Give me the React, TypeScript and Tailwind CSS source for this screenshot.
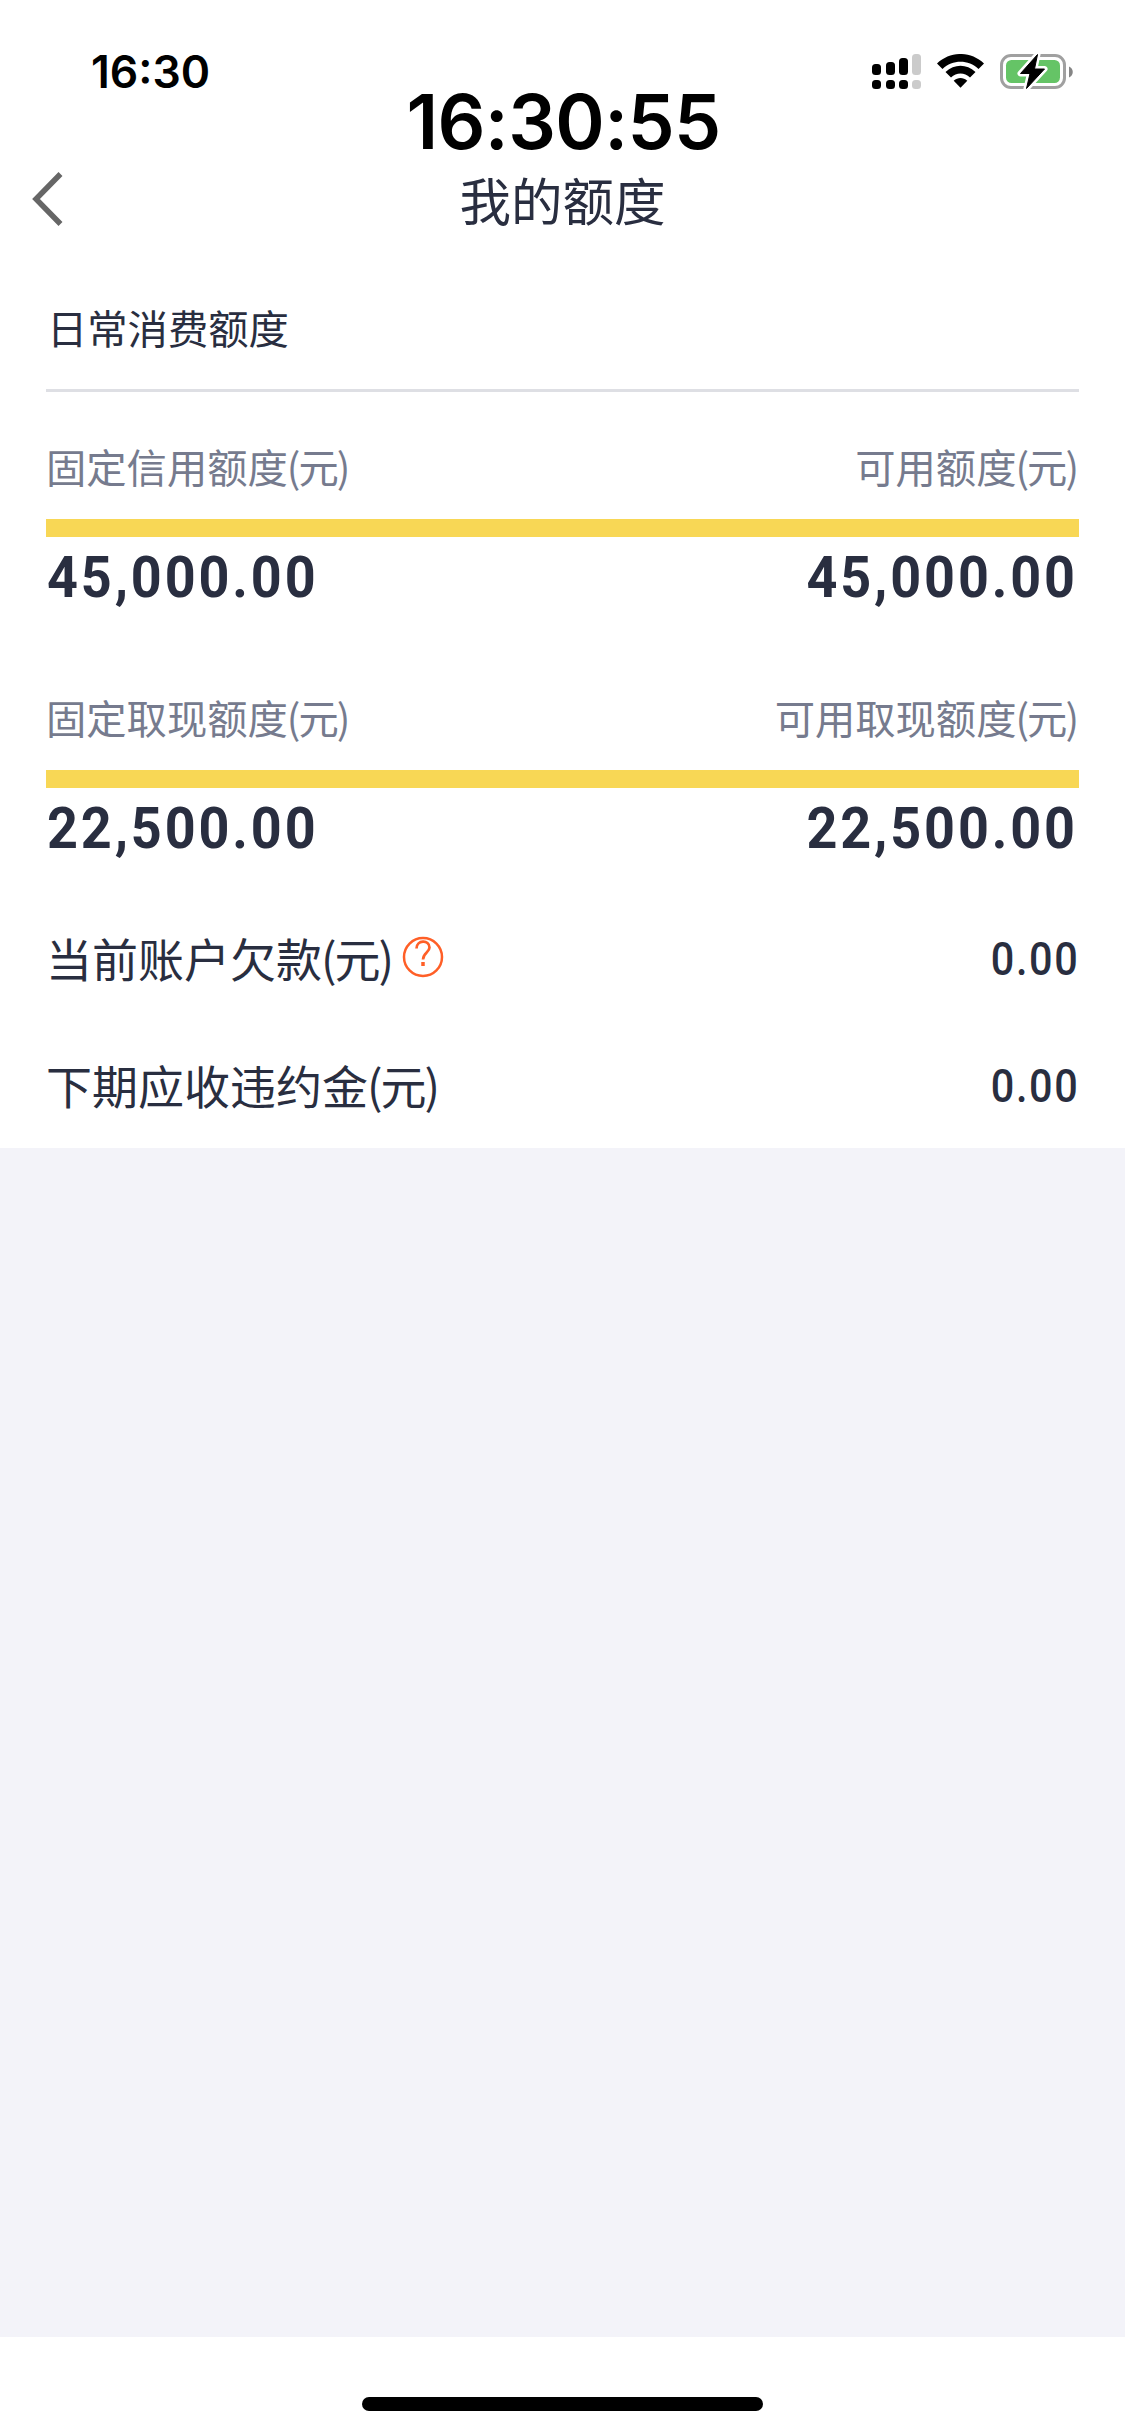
import React from "react";

type LimitProps = {
  totalLabel: string;
  total: string;
  availableLabel: string;
  available: string;
};

type AmountRowProps = {
  label: string;
  amount: string;
  hasHelp?: boolean;
};

const limits: LimitProps[] = [
  {
    totalLabel: "固定信用额度",
    total: "45,000.00",
    availableLabel: "可用额度",
    available: "45,000.00",
  },
  {
    totalLabel: "固定取现额度",
    total: "22,500.00",
    availableLabel: "可用取现额度",
    available: "22,500.00",
  },
];

const Yuan = () => (
  <>
    <span className="-mr-[2px] -ml-px">(</span>元<span className="-ml-[2px]">)</span>
  </>
);

const StatusIcons = () => (
  <div className="flex items-center">
    <svg width="50" height="36" viewBox="0 0 50 36">
      <rect x="0" y="10" width="9" height="11" rx="3.5" />
      <rect x="14" y="8" width="9" height="13" rx="3.5" />
      <rect x="27" y="4" width="9" height="17" rx="3.5" />
      <rect x="40" y="0" width="9" height="21" rx="3.5" fill="#cbcbcb" />
      <rect x="0" y="26" width="9" height="9" rx="3.5" />
      <rect x="14" y="26" width="9" height="9" rx="3.5" />
      <rect x="27" y="26" width="9" height="9" rx="3.5" />
      <rect x="40" y="26" width="9" height="9" rx="3.5" fill="#cbcbcb" />
    </svg>
    <svg className="ml-[15px]" width="48" height="36" viewBox="0 0 48 36">
      <path d="M0 9.5C13.5-3.2 33.5-3.2 47 9.5L41.5 15C31.5 5.3 15.5 5.3 5.500 15Z" />
      <path d="M8.500 18C17.500 9.600 29.500 9.600 38.500 18L33 23.500C27.500 18.300 19.500 18.300 14 23.500Z" />
      <path d="M16.700 26.700C20.800 23.200 26.200 23.200 30.300 26.700L23.500 33.800Z" />
    </svg>
    <svg className="ml-[15px]" width="74" height="38" viewBox="0 0 74 38">
      <rect x="1.500" y="2.500" width="63" height="32" rx="9.500" fill="none" stroke="#a0a0a0" strokeWidth="3" />
      <path d="M69 13.500C74 15.500 74 22.500 69 24.500Z" fill="#858585" />
      <rect x="6" y="7" width="54" height="23" rx="5.500" fill="#65c466" />
      <path
        d="M37.500 1.500L20.500 20.500H30L26.500 35.500L44.500 16H34.500Z"
        stroke="#fff"
        strokeWidth="6"
        strokeLinejoin="round"
      />
      <path
        d="M37.500 1.500L20.500 20.500H30L26.500 35.500L44.500 16H34.500Z"
        stroke="#000"
        strokeWidth="1"
        strokeLinejoin="round"
      />
    </svg>
  </div>
);

const Limit = ({ totalLabel, total, availableLabel, available }: LimitProps) => (
  <div className="h-[251px]">
    <div className="flex h-[76px] justify-between text-[40.3px] leading-[71px] text-[#767b8e]">
      <span>
        {totalLabel}
        <Yuan />
      </span>
      <span>
        {availableLabel}
        <Yuan />
      </span>
    </div>
    <div className="mt-[13px] h-[18px] bg-[#f8d755]" />
    <div className="flex justify-between px-px pt-[5px] font-[Roboto] text-[58px] leading-[70px] font-bold tracking-[3.1px] text-[#292e40]">
      <span className="origin-left scale-x-[0.93]">{total}</span>
      <span className="origin-right scale-x-[0.93]">{available}</span>
    </div>
  </div>
);

const AmountRow = ({ label, amount, hasHelp }: AmountRowProps) => (
  <div className="flex h-[127px] items-center justify-between text-[46px] text-[#292e40]">
    <div className="flex items-center pb-[5px]">
      <span>
        {label}
        <Yuan />
      </span>
      {hasHelp ? (
        <svg className="ml-[8px]" width="42" height="42" viewBox="0 0 42 42" fill="none" stroke="#ff5f27">
          <circle cx="21" cy="21" r="19" strokeWidth="2.500" />
          <path d="M14.500 12.500C14.500 3.500 27.500 3.500 27.500 11.500C27.500 16.500 21 16.500 21 23.500" strokeWidth="2.700" />
          <path d="M21 26V30" strokeWidth="3.500" />
        </svg>
      ) : null}
    </div>
    <span className="origin-right scale-x-[0.9] font-[Roboto] font-medium tracking-[1.8px]">
      {amount}
    </span>
  </div>
);

const App = () => {
  return (
    <div className="flex h-[2435px] w-[1125px] flex-col bg-white font-['Noto_Sans_CJK_SC',sans-serif]">
      <header className="relative h-[257px]">
        <div className="flex h-[142px] items-center justify-between pt-[2px] pr-[51px] pl-[91px] font-[Inter]">
          <span className="text-[44.5px] font-semibold">16:30</span>
          <StatusIcons />
        </div>
        <div className="absolute inset-x-0 top-[77px] pl-[2px] text-center font-[Inter] text-[75px] leading-[90px] font-semibold tracking-[-0.6px]">
          16:30:55
        </div>
        <div className="grid h-[113px] grid-cols-[120px_1fr_120px] items-center">
          <svg className="ml-8" width="32" height="54" viewBox="0 0 32 54" fill="none">
            <path d="M28.500 2L4 27L28.500 52" stroke="#666" strokeWidth="5.500" />
          </svg>
          <h1 className="text-center text-[51.5px] text-[#292e40]">我的额度</h1>
        </div>
      </header>
      <main className="h-[891px] px-[46px]">
        <h2 className="h-[132px] pl-px text-[40.3px] leading-[140px] text-[#292e40]">
          日常消费额度
        </h2>
        <div className="h-[3px] bg-[#dedfe4]" />
        <div className="pt-[38px]">
          {limits.map((limit) => (
            <Limit key={limit.totalLabel} {...limit} />
          ))}
        </div>
        <div className="-mt-[36px]">
          <AmountRow label="当前账户欠款" amount="0.00" hasHelp />
          <AmountRow label="下期应收违约金" amount="0.00" />
        </div>
      </main>
      <div className="flex-1 bg-[#f3f3f9]" />
      <footer className="flex h-[98px] justify-center pt-[60px]">
        <div className="h-[14px] w-[401px] rounded-full bg-black" />
      </footer>
    </div>
  );
};

export default App;
